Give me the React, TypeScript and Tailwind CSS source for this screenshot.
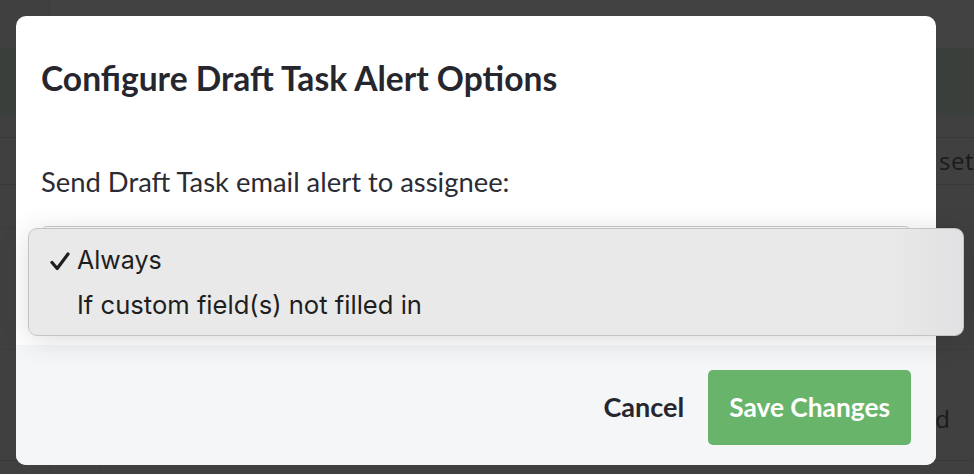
const lato = { fontFamily: 'Lato, "Open Sans", sans-serif' };

function BackgroundPage() {
  // dimmed page behind the overlay, only the edges show
  return (
    <div className="flex h-full w-full flex-col text-[#1a1a1a]" style={{ fontFamily: '"Open Sans", sans-serif' }}>
      <div className="flex h-12 w-full">
        <div className="w-[50px] border-r border-[#3a3a3a]" />
        <div className="flex-1 bg-[#424242]" />
      </div>
      <div className="h-[67px] w-full bg-[#3b3f3c]" />
      <div className="h-[23px] w-full border-b border-[#383838]" />
      <div className="flex h-[47px] w-full items-center justify-end border-b border-[#383838] text-[24px] tracking-[0.5px]">
        set
      </div>
      <div className="h-[43px] w-full border-b border-[#3c3c3c]" />
      <div className="h-[122px] w-full border-b border-[#3c3c3c]" />
      <div className="flex h-[110px] w-full items-center justify-end pr-[24px] pt-[28px] text-[24px]">
        d
      </div>
      <div className="flex flex-1 border-t border-[#3a3a3a]">
        <div className="w-[50px] border-r border-[#3a3a3a]" />
        <div className="w-[50px] border-r border-[#3a3a3a]" />
        <div className="flex-1" />
      </div>
    </div>
  );
}

export default function App() {
  return (
    <div className="relative h-[474px] w-[974px] overflow-hidden bg-[#404040]">
      <BackgroundPage />

      {/* Modal */}
      <div
        className="absolute left-4 top-4 flex h-[449px] w-[920px] flex-col overflow-hidden rounded-[10px] bg-white"
        style={lato}
      >
        <div className="px-[25px] pt-[42px]">
          <h2 className="text-[33.6px] font-bold leading-10 text-[#26262e]">Configure Draft Task Alert Options</h2>
        </div>
        <div className="px-[25px] pt-[67px]">
          <p className="text-[27.4px] leading-[34px] text-[#2b2b33]">Send Draft Task email alert to assignee:</p>
          <div className="mt-[27px] h-[46px] w-full rounded-md border border-[#c8ccd2] bg-white" />
        </div>
        <div className="mt-auto flex h-[120px] items-start justify-end gap-6 bg-[#f5f6f8] px-[25px] pt-[25px]">
          <button className="h-[75px] text-[27px] font-bold text-[#26262e]">Cancel</button>
          <button className="h-[75px] rounded-[5px] bg-[#68b46b] px-[21px] text-[26.3px] font-bold text-white">
            Save Changes
          </button>
        </div>
      </div>

      {/* Native select menu */}
      <div
        className="absolute left-[28px] top-[228px] flex h-[108px] w-[936px] flex-col rounded-[9px] border border-[#c4c4c4] bg-[linear-gradient(to_right,#e9e9e9_92%,#e1e1e3)] pl-[21px] pt-[13px] text-[#1e1e1e] shadow-[0_4px_30px_rgba(0,0,0,0.14)]"
        style={{ fontFamily: 'Inter, "Liberation Sans", sans-serif' }}
      >
        <div className="flex h-[38px] items-center">
          <svg width="20" height="19" viewBox="0 0 20 19" className="mr-[7px]">
            <path d="M2 10.5 L7.2 16.5 L18 2" fill="none" stroke="#1e1e1e" strokeWidth="3.2" strokeLinecap="round" strokeLinejoin="round" />
          </svg>
          <span className="text-[25px]">Always</span>
        </div>
        <div className="mt-[6px] flex h-[38px] items-center pl-[27px]">
          <span className="text-[25.6px]">If custom field(s) not filled in</span>
        </div>
      </div>
    </div>
  );
}
